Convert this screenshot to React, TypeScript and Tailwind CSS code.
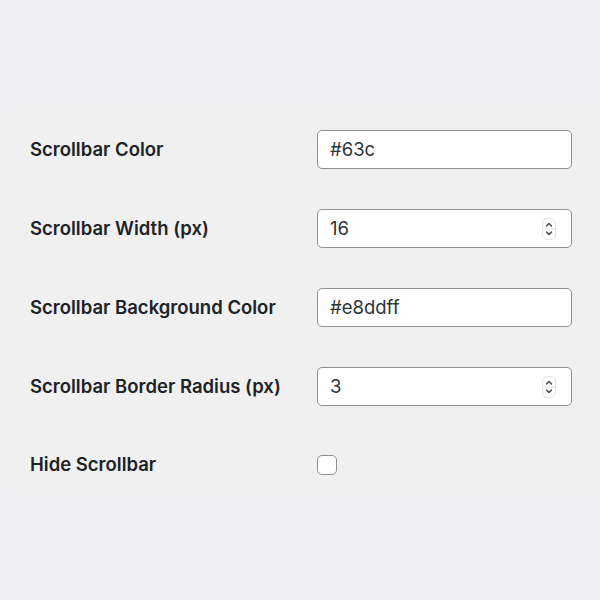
import React from "react";

function Spinner() {
  return (
    <svg width="14" height="22" viewBox="0 0 14 22" className="shrink-0">
      <rect x="0.5" y="0.5" width="13" height="21" rx="5" fill="#fff" stroke="#e2e2e4" />
      <line x1="1" y1="11" x2="13" y2="11" stroke="#e2e2e4" />
      <path d="M4.5 8 L7 5.5 L9.5 8" fill="none" stroke="#3c434a" strokeWidth="1.4" strokeLinecap="round" strokeLinejoin="round" />
      <path d="M4.5 14 L7 16.5 L9.5 14" fill="none" stroke="#3c434a" strokeWidth="1.4" strokeLinecap="round" strokeLinejoin="round" />
    </svg>
  );
}

function Field({ value, number }: { value: string; number?: boolean }) {
  return (
    <div className="flex h-[39px] w-[255px] items-center justify-between rounded-[5px] border border-[#8c8f94] bg-white pl-[12px] pr-[15px] text-[18.5px] text-[#2c3338]">
      <span>{value}</span>
      {number && <Spinner />}
    </div>
  );
}

const rows = [
  { label: "Scrollbar Color", value: "#63c" },
  { label: "Scrollbar Width (px)", value: "16", number: true },
  { label: "Scrollbar Background Color", value: "#e8ddff" },
  { label: "Scrollbar Border Radius (px)", value: "3", number: true },
];

export default function App() {
  return (
    <div className="h-[600px] w-[600px] bg-[#efeff1] pt-[108px] font-['Inter',sans-serif] text-[#1d2327]">
      <div className="ml-[12px] flex h-[383px] flex-col bg-[#f0f0f0] pl-[18px] pt-[2px]">
        {rows.map((r) => (
          <div key={r.label} className="flex h-[79px] items-center">
            <div className="w-[287px] text-[18.5px] font-semibold">{r.label}</div>
            <Field value={r.value} number={r.number} />
          </div>
        ))}
        <div className="flex items-center pt-[25px]">
          <div className="w-[287px] text-[18.5px] font-semibold">Hide Scrollbar</div>
          <div className="h-[20px] w-[20px] rounded-[5px] border border-[#8c8f94] bg-white" />
        </div>
      </div>
    </div>
  );
}
